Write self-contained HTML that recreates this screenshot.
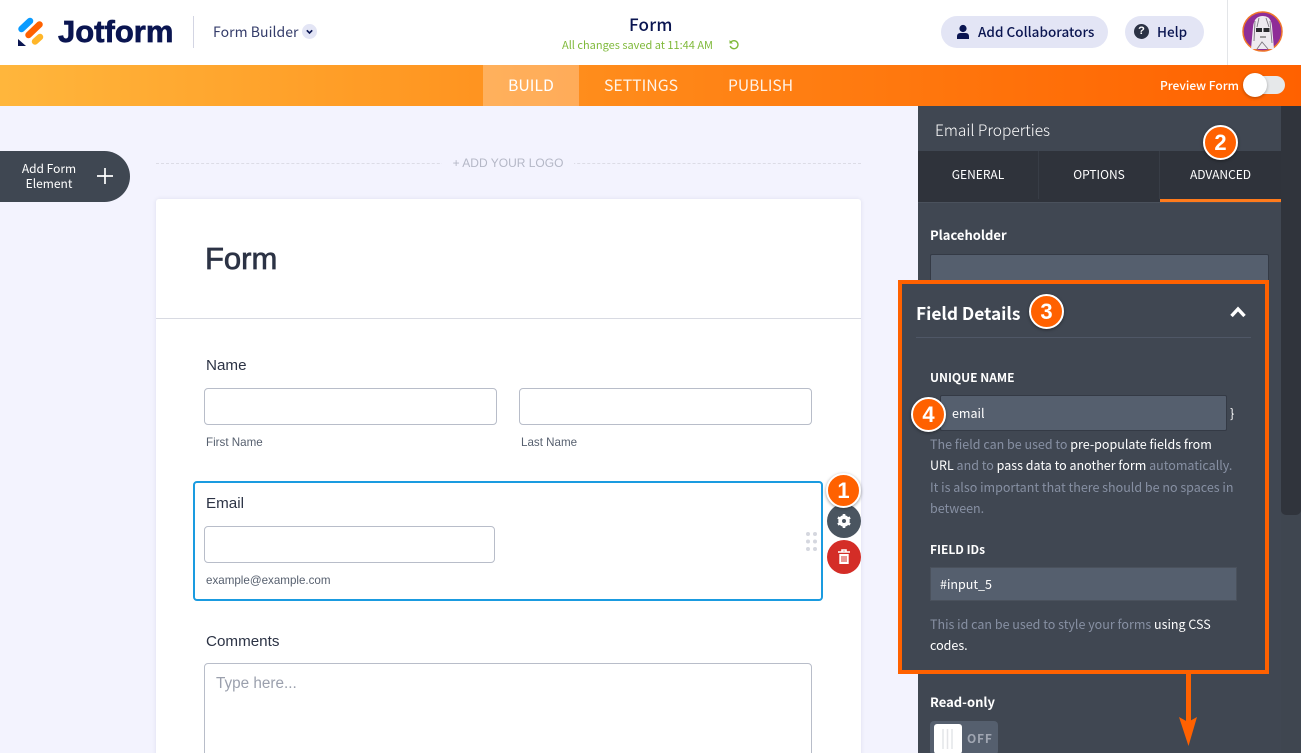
<!DOCTYPE html>
<html><head><meta charset="utf-8"><style>
*{box-sizing:border-box}
html,body{margin:0;padding:0;width:1301px;height:753px;overflow:hidden}
body{position:relative;background:#f3f3fe;font-family:"Noto Sans CJK SC","Liberation Sans",sans-serif;}
#r{position:absolute;left:0;top:0;width:1301px;height:753px;overflow:hidden;background:#f3f3fe}
.a{position:absolute;white-space:nowrap}
.s{font-family:"Liberation Sans",sans-serif}
.input{position:absolute;background:#fff;border:1px solid #b8bdc9;border-radius:4px}
.dk{position:absolute;background:#555f6e;border:1px solid #343a45;}
.badge{position:absolute;width:35px;height:35px;border-radius:50%;background:#ff6100;border:2px solid #fff;color:#fff;font:bold 22px/31px "Liberation Sans",sans-serif;text-align:center;box-shadow:0 1px 3px rgba(0,0,0,.4)}
.g{color:#8790a3}.w{color:#fff}
</style></head><body><div id="r">
<div class="a" style="left:0;top:0;width:1301px;height:65px;background:#fff"></div>
<svg class="a" style="left:17px;top:17px" width="29" height="30" viewBox="0 0 29 30">
<path d="M4.5 12 L13 4" stroke="#0a9bff" stroke-width="6.5" stroke-linecap="round"/>
<path d="M11.5 18 L22.5 7.5" stroke="#ff6100" stroke-width="6.5" stroke-linecap="round"/>
<path d="M18 24.5 L23 20" stroke="#ffb629" stroke-width="6.5" stroke-linecap="round"/>
<path d="M1 22 L1 29 L9 29 Z" fill="#0a1551"/></svg>
<div class="a s" style="left:58px;top:13px;font-size:31px;line-height:38px;font-weight:bold;color:#0a1551;letter-spacing:0;-webkit-text-stroke:.7px #0a1551">Jotform</div>
<div class="a" style="left:193px;top:16px;width:1px;height:32px;background:#d3d5e3"></div>
<div class="a" style="left:213px;top:22px;font-size:14px;line-height:20px;color:#343c6a;letter-spacing:.05px">Form Builder</div>
<div class="a" style="left:302px;top:24px;width:15px;height:15px;border-radius:50%;background:#e3e5f5"></div>
<svg class="a" style="left:302px;top:24px" width="15" height="15"><path d="M4.8 6.3 L7.5 9 L10.2 6.3" fill="none" stroke="#0a1551" stroke-width="1.6"/></svg>
<div class="a" style="left:629px;top:12px;font-size:17px;line-height:24px;color:#0a1551;font-weight:500;letter-spacing:.2px">Form</div>
<div class="a" style="left:562px;top:38px;font-size:11px;line-height:15px;color:#7fb93a">All changes saved at 11:44 AM</div>
<svg class="a" style="left:728px;top:39px" width="12" height="12" viewBox="0 0 12 12"><path d="M3 3 A4 4 0 1 1 2.2 7" fill="none" stroke="#7fb93a" stroke-width="1.4"/><path d="M1.5 1 L1.5 4.5 L5 4.5 Z" fill="#7fb93a"/></svg>

<div class="a" style="left:941px;top:16px;width:167px;height:32px;border-radius:16px;background:#e3e5f5"></div>
<svg class="a" style="left:955px;top:24px" width="16" height="16" viewBox="0 0 16 16"><circle cx="8" cy="4.5" r="3.6" fill="#0a1551"/><path d="M2 15 V12.5 Q2 9 5.5 9 H10.5 Q14 9 14 12.5 V15 Z" fill="#0a1551"/></svg>
<div class="a" style="left:978px;top:21px;font-size:13.5px;line-height:20px;color:#0a1551;font-weight:500;letter-spacing:.02px">Add Collaborators</div>
<div class="a" style="left:1125px;top:16px;width:79px;height:32px;border-radius:16px;background:#e3e5f5"></div>
<div class="a" style="left:1134px;top:24px;width:15px;height:15px;border-radius:50%;background:#2b3245;color:#fff;font:bold 11px/15px 'Liberation Sans',sans-serif;text-align:center">?</div>
<div class="a" style="left:1157px;top:21px;font-size:13.5px;line-height:20px;color:#0a1551;font-weight:500">Help</div>
<div class="a" style="left:1227px;top:0;width:1px;height:65px;background:#e3e5e8"></div>
<svg class="a" style="left:1242px;top:11px" width="41" height="41" viewBox="0 0 41 41">
<circle cx="20.5" cy="20.5" r="19.5" fill="#8e2d97" stroke="#f0762a" stroke-width="1.5"/>
<path d="M9 38 L11 16 Q12 5 21 5 Q29 5 30 15 L32 38 Z" fill="#eeeaf0"/>
<path d="M13 10 L12 30 M28 10 L30 32 M17 7 L15 16 M24 7 L27 16 M15 38 L20 31 L26 38" stroke="#7d7780" stroke-width=".9" fill="none"/>
<rect x="14" y="17" width="6" height="4" fill="#2a2a2e"/><rect x="21.5" y="17" width="6" height="4" fill="#2a2a2e"/><path d="M18 26 H24" stroke="#444"/></svg>

<div class="a" style="left:0;top:65px;width:1301px;height:41px;background:linear-gradient(90deg,#ffb63c 0%,#ff9a24 30%,#ff7b10 65%,#ff6100 100%)"></div>
<div class="a" style="left:483px;top:65px;width:96px;height:41px;background:rgba(255,255,255,.27)"></div>
<div class="a" style="left:508px;top:74px;font-size:15.8px;line-height:22px;color:#fff">BUILD</div>
<div class="a" style="left:604px;top:74px;font-size:15.8px;line-height:22px;color:#fff;opacity:.9">SETTINGS</div>
<div class="a" style="left:728px;top:74px;font-size:15.6px;line-height:22px;color:#fff;opacity:.9">PUBLISH</div>
<div class="a" style="left:1160px;top:77px;font-size:12px;line-height:17px;color:#fff;font-weight:500">Preview Form</div>
<div class="a" style="left:1246px;top:76px;width:39px;height:18px;border-radius:9px;background:#e6e8ea"></div>
<div class="a" style="left:1243px;top:73px;width:24px;height:24px;border-radius:50%;background:#fff;box-shadow:0 1px 3px rgba(0,0,0,.3)"></div>

<!-- left button -->
<div class="a" style="left:0;top:151px;width:130px;height:51px;background:#3f4752;border-radius:0 26px 26px 0"></div>
<div class="a" style="left:0;top:161px;width:98px;text-align:center;font-size:12px;line-height:15px;color:#fff;white-space:normal">Add Form<br>Element</div>
<svg class="a" style="left:97px;top:168px" width="16" height="16"><path d="M8 0 V16 M0 8 H16" stroke="#fff" stroke-width="1.7"/></svg>

<!-- logo row -->
<div class="a" style="left:156px;top:163px;width:705px;border-top:1px dashed #dcdce6"></div>
<div class="a" style="left:442px;top:155px;width:132px;text-align:center;background:#f3f3fe;font:12px/17px 'Liberation Sans',sans-serif;color:#b4b7c6">+ ADD YOUR LOGO</div>

<!-- form -->
<div class="a" style="left:156px;top:199px;width:705px;height:560px;background:#fff;border-radius:3px 3px 0 0;box-shadow:0 0 4px rgba(40,50,90,.1)"></div>
<div class="a s" style="left:205px;top:240px;font-size:31px;line-height:38px;color:#2c3345;-webkit-text-stroke:.7px #2c3345">Form</div>
<div class="a" style="left:156px;top:318px;width:705px;height:1px;background:#d8dae2"></div>

<div class="a s" style="left:206px;top:357px;font-size:15.2px;line-height:18px;color:#2c3345">Name</div>
<div class="input" style="left:204px;top:388px;width:293px;height:37px"></div>
<div class="input" style="left:519px;top:388px;width:293px;height:37px"></div>
<div class="a s" style="left:206px;top:436px;font-size:11.6px;line-height:14px;color:#57606f">First Name</div>
<div class="a s" style="left:521px;top:436px;font-size:11.6px;line-height:14px;color:#57606f">Last Name</div>

<div class="a" style="left:193px;top:481px;width:630px;height:120px;border:2px solid #1a9be0;border-radius:4px"></div>
<div class="a s" style="left:206px;top:495px;font-size:15.2px;line-height:18px;color:#2c3345">Email</div>
<div class="input" style="left:204px;top:526px;width:291px;height:37px"></div>
<div class="a s" style="left:206px;top:574px;font-size:11.6px;line-height:14px;color:#57606f">example@example.com</div>
<svg class="a" style="left:805px;top:531px" width="13" height="21"><g fill="#d5d7df"><circle cx="3" cy="3" r="2"/><circle cx="10" cy="3" r="2"/><circle cx="3" cy="10.5" r="2"/><circle cx="10" cy="10.5" r="2"/><circle cx="3" cy="18" r="2"/><circle cx="10" cy="18" r="2"/></g></svg>

<div class="a" style="left:827px;top:504px;width:34px;height:34px;border-radius:50%;background:#4a5560"></div>
<svg class="a" style="left:835px;top:512px" width="18" height="18" viewBox="0 0 18 18"><circle cx="9" cy="9" r="4.2" fill="none" stroke="#fff" stroke-width="3"/><path d="M9 2 V16 M2.9 5.5 L15.1 12.5 M2.9 12.5 L15.1 5.5" stroke="#fff" stroke-width="2.6"/><circle cx="9" cy="9" r="2" fill="#4a5560"/></svg>
<div class="a" style="left:827px;top:540px;width:34px;height:34px;border-radius:50%;background:#d42d27"></div>
<svg class="a" style="left:837px;top:549px" width="14" height="16" viewBox="0 0 14 16"><path d="M1 3 H13 M5 3 V1 H9 V3" stroke="#fff" stroke-width="1.6" fill="none"/><path d="M2.3 5 H11.7 V15 H2.3 Z" fill="#fff"/><path d="M5 7 V13 M7 7 V13 M9 7 V13" stroke="#d42d27" stroke-width="1"/></svg>

<div class="a s" style="left:206px;top:633px;font-size:15.2px;line-height:18px;color:#2c3345">Comments</div>
<div class="input" style="left:204px;top:663px;width:608px;height:120px"></div>
<div class="a s" style="left:216px;top:675px;font-size:15.3px;line-height:18px;color:#9ba0ad">Type here...</div>

<!-- right panel -->
<div class="a" style="left:918px;top:106px;width:363px;height:647px;background:#404752"></div>
<div class="a" style="left:1281px;top:106px;width:20px;height:647px;background:#3f4650"></div>
<div class="a" style="left:1281px;top:106px;width:20px;height:409px;background:#30343c;border-radius:0 0 5px 5px"></div>
<div class="a" style="left:935px;top:119px;font-size:15.5px;line-height:22px;color:#fff;font-weight:300">Email Properties</div>
<div class="a" style="left:918px;top:151px;width:363px;height:52px;background:#2f333b;border-bottom:1px solid #4a515c"></div>
<div class="a" style="left:1038px;top:151px;width:1px;height:48px;background:#383d46"></div>
<div class="a" style="left:1159px;top:151px;width:1px;height:48px;background:#383d46"></div>
<div class="a" style="left:1160px;top:199px;width:121px;height:3px;background:#ff7b1c"></div>
<div class="a" style="left:918px;top:166px;width:120px;text-align:center;font-size:12px;line-height:18px;color:#fff">GENERAL</div>
<div class="a" style="left:1039px;top:166px;width:120px;text-align:center;font-size:12px;line-height:18px;color:#fff">OPTIONS</div>
<div class="a" style="left:1160px;top:166px;width:121px;text-align:center;font-size:12px;line-height:18px;color:#fff">ADVANCED</div>

<div class="a" style="left:930px;top:226px;font-size:13px;line-height:18px;color:#fff;font-weight:700">Placeholder</div>
<div class="dk" style="left:930px;top:254px;width:339px;height:40px;border-radius:2px"></div>

<!-- highlight -->
<div class="a" style="left:898px;top:280px;width:371px;height:394px;background:#404752;border:4px solid #ff6100"></div>
<div class="a" style="left:916px;top:300px;font-size:17.3px;line-height:26px;color:#fff;font-weight:700">Field Details</div>
<svg class="a" style="left:1230px;top:306px" width="16" height="12"><path d="M1.5 10 L8 3 L14.5 10" fill="none" stroke="#fff" stroke-width="3.4"/></svg>
<div class="a" style="left:916px;top:337px;width:335px;height:1px;background:#4f5766"></div>
<div class="a" style="left:930px;top:369px;font-size:12px;line-height:17px;color:#fff;font-weight:700">UNIQUE NAME</div>
<div class="dk" style="left:940px;top:395px;width:287px;height:36px;border-radius:2px"></div>
<div class="a" style="left:952px;top:404px;font-size:12.5px;line-height:18px;color:#fff">email</div>
<div class="a" style="left:1230px;top:404px;font-size:12.5px;line-height:18px;color:#fff">}</div>
<div class="a g" style="left:930px;top:433px;font-size:12.5px;line-height:21.3px;white-space:nowrap">The field can be used to <span class="w">pre-populate fields from</span><br><span class="w">URL</span> and to <span class="w">pass data to another form</span> automatically.<br>It is also important that there should be no spaces in<br>between.</div>
<div class="a" style="left:930px;top:541px;font-size:12px;line-height:17px;color:#fff;font-weight:700">FIELD IDs</div>
<div class="dk" style="left:930px;top:567px;width:307px;height:34px;border-color:#4a515c"></div>
<div class="a" style="left:940px;top:575px;font-size:12.5px;line-height:18px;color:#fff">#input_5</div>
<div class="a g" style="left:930px;top:613px;font-size:12.5px;line-height:21px">This id can be used to style your forms <span class="w">using CSS</span><br><span class="w">codes.</span></div>

<div class="a" style="left:930px;top:693px;font-size:13px;line-height:18px;color:#fff;font-weight:700">Read-only</div>
<div class="a" style="left:930px;top:721px;width:68px;height:34px;background:#555f6e;border-radius:4px"></div>
<div class="a" style="left:934px;top:724px;width:28px;height:30px;background:#fff;border-radius:3px"></div>
<svg class="a" style="left:941px;top:729px" width="14" height="20"><path d="M2 0 V20 M6.5 0 V20 M11 0 V20" stroke="#e4e5e8" stroke-width="1.5"/></svg>
<div class="a" style="left:967px;top:730px;font-size:12px;line-height:17px;color:#a0a6b2;font-weight:700;letter-spacing:.8px">OFF</div>

<!-- arrow -->
<div class="a" style="left:1186px;top:674px;width:5px;height:50px;background:#ff6100"></div>
<svg class="a" style="left:1178px;top:716px" width="21" height="31"><path d="M1 1 L10 6 L19 1 L10.5 30 Z" fill="#ff6100"/></svg>

<!-- badges -->
<div class="badge" style="left:1203px;top:125px">2</div>
<div class="badge" style="left:1029px;top:294px">3</div>
<div class="badge" style="left:911px;top:397px">4</div>
<div class="badge" style="left:826px;top:473px">1</div>
</div></body></html>
